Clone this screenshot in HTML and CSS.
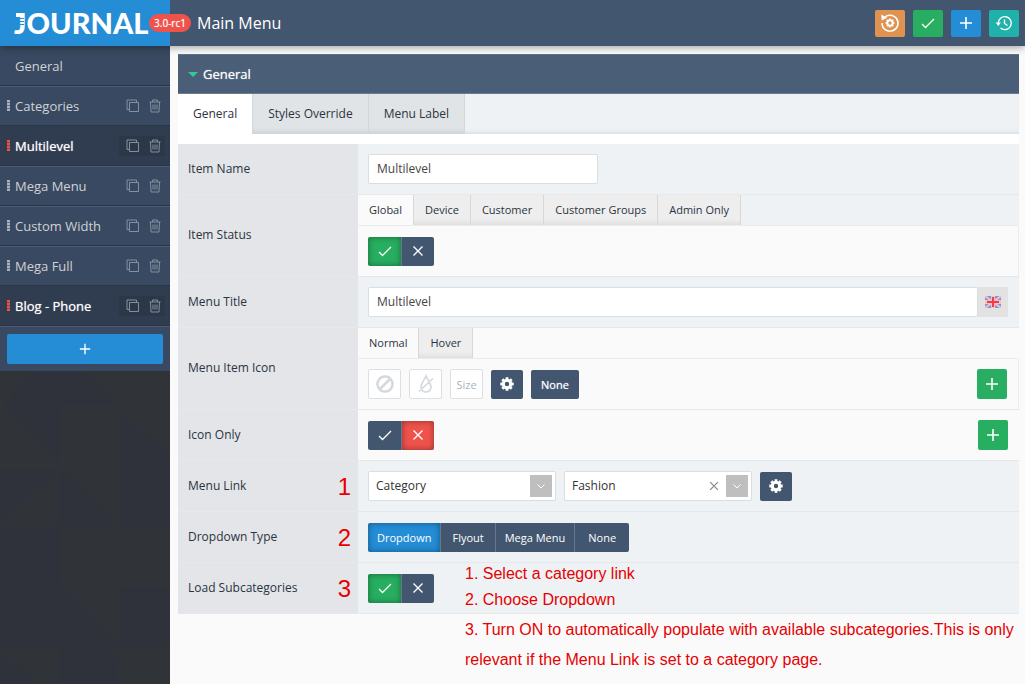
FILE: index.html
```html
<!DOCTYPE html>
<html lang="en">
<head>
    <meta charset="utf-8">
    <meta name="viewport" content="width=device-width, initial-scale=1.0">
    <title>Main Menu</title>
    <link rel="stylesheet" href="styles.css">
</head>
<body>
    <!-- icons -->
    <svg class="sprite" aria-hidden="true">
        <symbol id="copy" viewBox="0 0 14 14"><path d="M3.5 3.5h9v9h-9zM3.5 10.500h-2.500V1h9.500v2.500" fill="none" stroke="currentColor"/></symbol>
        <symbol id="trash" viewBox="0 0 12 14"><path d="M.5 3h11M3.500 3V1h5v2M1.500 3l.5 10h8l.5-10M4 5.500v5M6 5.500v5M8 5.500v5" fill="none" stroke="currentColor"/></symbol>
        <symbol id="plus" viewBox="0 0 14 14"><path d="M7 1v12M1 7h12" fill="none" stroke="currentColor" stroke-width="1.600"/></symbol>
        <symbol id="check" viewBox="0 0 14 14"><path d="M1 8l3.500 3.500L13 3" fill="none" stroke="currentColor" stroke-width="1.300"/></symbol>
        <symbol id="cross" viewBox="0 0 14 14"><path d="M2.500 2.500l9 9M11.500 2.500l-9 9" fill="none" stroke="currentColor" stroke-width="1.400"/></symbol>
        <symbol id="chevron" viewBox="0 0 14 14"><path d="M3.500 5.500L7 9l3.500-3.500" fill="none" stroke="currentColor"/></symbol>
        <symbol id="gear" viewBox="0 0 14 14"><circle cx="7" cy="7" r="3.700" fill="none" stroke="currentColor" stroke-width="3"/><path d="M7 .3v2.500M7 11.200v2.500M.3 7h2.500M11.200 7h2.500M2.300 2.300L4 4M10 10l1.700 1.700M11.700 2.300L10 4M2.300 11.700L4 10" fill="none" stroke="currentColor" stroke-width="2.800"/></symbol>
        <symbol id="reset" viewBox="0 0 20 20"><path d="M3.500 5.500A8 8 0 1 1 2 10" fill="none" stroke="currentColor" stroke-width="1.500"/><path d="M1.200 1.500l.6 6 5.400-2.700z" fill="currentColor"/><circle cx="10" cy="10" r="2.700" fill="none" stroke="currentColor" stroke-width="2"/><path d="M10 5.500v2M10 12.500v2M5.500 10h2M12.500 10h2M6.800 6.800l1.400 1.400M11.800 11.800l1.400 1.400M13.200 6.800l-1.400 1.400M6.800 13.200l1.400-1.400" stroke="currentColor" stroke-width="1.600"/></symbol>
        <symbol id="history" viewBox="0 0 18 18"><path d="M3.300 9.500A6.500 6.500 0 1 1 5.500 14M9.500 5.500V9.500l3 2" fill="none" stroke="currentColor" stroke-width="1.400"/><path d="M.7 8.500h5.200L3.300 12z" fill="currentColor"/></symbol>
        <symbol id="ban" viewBox="0 0 18 18"><path d="M9 1.500a7.500 7.500 0 1 0 .01 0zM4 14L14 4" fill="none" stroke="currentColor" stroke-width="2.500"/></symbol>
        <symbol id="drop" viewBox="0 0 18 20"><path d="M9 2C7.500 6 4 9 4 13a5 5 0 0 0 10 0c0-4-3.500-7-5-11zM2 17.500L16 4.500" fill="none" stroke="currentColor" stroke-width="1.700"/></symbol>
    </svg>

    <header class="topbar">
        <a class="brand" href="#"><span class="logo">JOURNAL</span><span class="version">3.0-rc1</span></a>
        <h1>Main Menu</h1>
        <div class="actions">
            <button class="action orange" aria-label="Reset"><svg width="20" height="20"><use href="#reset"/></svg></button>
            <button class="action green" aria-label="Save"><svg width="14" height="14"><use href="#check"/></svg></button>
            <button class="action blue" aria-label="Add"><svg width="14" height="14"><use href="#plus"/></svg></button>
            <button class="action teal" aria-label="History"><svg width="18" height="18"><use href="#history"/></svg></button>
        </div>
    </header>

    <div class="layout">
        <nav class="sidebar">
            <div class="item"><a href="#">General</a></div>
            <div class="item">
                <i class="grip"></i><a href="#">Categories</a>
                <span class="tools"><button aria-label="Copy"><svg width="14" height="14"><use href="#copy"/></svg></button><button aria-label="Delete"><svg width="12" height="14"><use href="#trash"/></svg></button></span>
            </div>
            <div class="item active">
                <i class="grip"></i><a href="#">Multilevel</a>
                <span class="tools"><button aria-label="Copy"><svg width="14" height="14"><use href="#copy"/></svg></button><button aria-label="Delete"><svg width="12" height="14"><use href="#trash"/></svg></button></span>
            </div>
            <div class="item">
                <i class="grip"></i><a href="#">Mega Menu</a>
                <span class="tools"><button aria-label="Copy"><svg width="14" height="14"><use href="#copy"/></svg></button><button aria-label="Delete"><svg width="12" height="14"><use href="#trash"/></svg></button></span>
            </div>
            <div class="item">
                <i class="grip"></i><a href="#">Custom Width</a>
                <span class="tools"><button aria-label="Copy"><svg width="14" height="14"><use href="#copy"/></svg></button><button aria-label="Delete"><svg width="12" height="14"><use href="#trash"/></svg></button></span>
            </div>
            <div class="item">
                <i class="grip"></i><a href="#">Mega Full</a>
                <span class="tools"><button aria-label="Copy"><svg width="14" height="14"><use href="#copy"/></svg></button><button aria-label="Delete"><svg width="12" height="14"><use href="#trash"/></svg></button></span>
            </div>
            <div class="item active">
                <i class="grip"></i><a href="#">Blog - Phone</a>
                <span class="tools"><button aria-label="Copy"><svg width="14" height="14"><use href="#copy"/></svg></button><button aria-label="Delete"><svg width="12" height="14"><use href="#trash"/></svg></button></span>
            </div>
            <div class="add"><button class="blue" aria-label="Add item"><svg width="12" height="12"><use href="#plus"/></svg></button></div>
            <div class="pattern">
                <svg viewBox="0 0 170 313" preserveAspectRatio="xMinYMin slice" aria-hidden="true">
                    <path fill="#2f323b" d="M34 0h52l34 34H60v60L3 35zM120 40l50 45v70h-50zM0 98h60L0 152zM60 98l58 57H60zM0 155h60v55l60 65-34 38H60v-37H0zM120 217h50v58h-50zM0 279l36 34H0zM118 283v30H88z"/>
                </svg>
            </div>
        </nav>

        <main class="content">
            <section class="panel">
                <h2 class="panel-title">General</h2>
                <div class="tabs">
                    <button class="selected">General</button><button>Styles Override</button><button>Menu Label</button>
                </div>

                <div class="row">
                    <div class="label"><label for="name">Item Name</label></div>
                    <div class="field"><input class="text short" id="name" type="text" value="Multilevel"></div>
                </div>
                <div class="row light">
                    <div class="label"><span>Item Status</span></div>
                    <div class="stack">
                        <div class="subtabs">
                            <button class="selected">Global</button><button>Device</button><button>Customer</button><button>Customer Groups</button><button>Admin Only</button>
                        </div>
                        <div class="field">
                            <div class="switch">
                                <button class="on green" aria-label="On"><svg width="14" height="14"><use href="#check"/></svg></button><button aria-label="Off"><svg width="14" height="14"><use href="#cross"/></svg></button>
                            </div>
                        </div>
                    </div>
                </div>
                <div class="row">
                    <div class="label"><label for="title">Menu Title</label></div>
                    <div class="field joined">
                        <input class="text" id="title" type="text" value="Multilevel">
                        <span class="flag">
                            <svg width="16" height="12" viewBox="0 0 16 12" aria-hidden="true">
                                <path fill="#8496cf" d="M0 0h16v12H0z"/>
                                <path stroke="#e9c3d0" stroke-width="2" d="M0 0l16 12M16 0L0 12"/>
                                <path stroke="#f7c0c8" stroke-width="4" d="M8 0v12M0 6h16"/>
                                <path stroke="#f03c44" stroke-width="2" d="M8 1v10M2 6h12"/>
                            </svg>
                        </span>
                    </div>
                </div>
                <div class="row light">
                    <div class="label"><span>Menu Item Icon</span></div>
                    <div class="stack">
                        <div class="subtabs plain">
                            <button class="selected">Normal</button><button>Hover</button>
                        </div>
                        <div class="field">
                            <button class="box" aria-label="No icon"><svg width="18" height="18"><use href="#ban"/></svg></button>
                            <button class="box" aria-label="No color"><svg width="18" height="20"><use href="#drop"/></svg></button>
                            <button class="box">Size</button>
                            <button class="dark gear" aria-label="Settings"><svg width="14" height="14"><use href="#gear"/></svg></button>
                            <button class="dark none">None</button>
                            <button class="plus green" aria-label="Add"><svg width="14" height="14"><use href="#plus"/></svg></button>
                        </div>
                    </div>
                </div>
                <div class="row light">
                    <div class="label"><span>Icon Only</span></div>
                    <div class="field">
                        <div class="switch">
                            <button aria-label="On"><svg width="14" height="14"><use href="#check"/></svg></button><button class="on red" aria-label="Off"><svg width="14" height="14"><use href="#cross"/></svg></button>
                        </div>
                        <button class="plus green" aria-label="Add"><svg width="14" height="14"><use href="#plus"/></svg></button>
                    </div>
                </div>
                <div class="row">
                    <div class="label"><label for="link">Menu Link</label><b class="step">1</b></div>
                    <div class="field">
                        <div class="select">
                            <select id="link"><option>Category</option></select>
                            <span class="arrow"><svg width="14" height="14"><use href="#chevron"/></svg></span>
                        </div>
                        <div class="select">
                            <select aria-label="Category"><option>Fashion</option></select>
                            <button class="clear" aria-label="Clear"><svg width="12" height="12"><use href="#cross"/></svg></button>
                            <span class="arrow"><svg width="14" height="14"><use href="#chevron"/></svg></span>
                        </div>
                        <button class="dark gear" aria-label="Settings"><svg width="14" height="14"><use href="#gear"/></svg></button>
                    </div>
                </div>
                <div class="row">
                    <div class="label"><span>Dropdown Type</span><b class="step">2</b></div>
                    <div class="field">
                        <div class="switch words">
                            <button class="on blue">Dropdown</button><button class="mid">Flyout</button><button>Mega Menu</button><button class="wide">None</button>
                        </div>
                    </div>
                </div>
                <div class="row">
                    <div class="label"><span>Load Subcategories</span><b class="step">3</b></div>
                    <div class="field">
                        <div class="switch">
                            <button class="on green" aria-label="On"><svg width="14" height="14"><use href="#check"/></svg></button><button aria-label="Off"><svg width="14" height="14"><use href="#cross"/></svg></button>
                        </div>
                    </div>
                </div>

                <!-- notes laid over the last row -->
                <div class="notes">
                    <p>1. Select a category link</p>
                    <p>2. Choose Dropdown</p>
                    <p class="long">3. Turn ON to automatically populate with available subcategories.This is only relevant if the Menu Link is set to a category page.</p>
                </div>
            </section>
        </main>
    </div>
</body>
</html>
```
FILE: styles.css
```css
* {
    box-sizing: border-box;
}

body {
    margin: 0;
    min-height: 100vh;
    display: flex;
    flex-direction: column;
    background: #fafafa;
    color: #2b3441;
    font-family: "Open Sans", "Noto Sans", sans-serif;
    font-size: 12px;
}

button {
    display: flex;
    align-items: center;
    justify-content: center;
    padding: 0;
    border: 0;
    background: none;
    color: inherit;
    font: inherit;
    cursor: pointer;
}

a {
    color: inherit;
    text-decoration: none;
}

.sprite {
    display: none;
}

.green { background: #27ae60; }
.blue { background: #248dd6; }
.orange { background: #e09351; }
.teal { background: #20b2aa; }
.red { background: #ef524b; }

/* top bar */
.topbar {
    position: relative;
    z-index: 2;
    display: flex;
    align-items: center;
    height: 46px;
    padding-right: 6px;
    background: #43566f;
    color: #fff;
    box-shadow: 0 1px 8px rgba(0, 0, 0, .4);
}

.brand {
    position: relative;
    width: 170px;
    height: 46px;
    padding-left: 14px;
    background: #248dd6;
}

.logo {
    font-family: "Lato", sans-serif;
    font-size: 29px;
    font-weight: 900;
    line-height: 46px;
}

/* top bar of the J */
.logo::before {
    content: "";
    position: absolute;
    left: 16px;
    top: 13px;
    width: 6px;
    height: 4px;
    background: #fff;
}

/* stripes cut into the J */
.logo::after {
    content: "";
    position: absolute;
    left: 20px;
    top: 18px;
    width: 4px;
    height: 8px;
    background: repeating-linear-gradient(#248dd6 0 1px, transparent 1px 3px);
}

.version {
    position: absolute;
    left: 149px;
    top: 14px;
    width: 42px;
    border-radius: 9px;
    background: #ef524b;
    font-size: 10px;
    font-weight: 500;
    line-height: 18px;
    text-align: center;
}

.topbar h1 {
    margin: 0 0 0 27px;
    font-size: 16px;
    font-weight: 400;
}

.actions {
    display: flex;
    gap: 8px;
    margin-left: auto;
}

.action {
    width: 30px;
    height: 27px;
    border-radius: 2px;
}

/* sidebar */
.layout {
    display: flex;
    flex: 1;
}

.sidebar {
    display: flex;
    flex-direction: column;
    width: 170px;
    background: #394961;
}

.item {
    display: flex;
    align-items: center;
    height: 40px;
    padding: 0 5px 0 7px;
    border-bottom: 1px solid #2a3647;
    box-shadow: 0 1px #4a5c74;
    color: #d0d2d4;
    font-size: 13px;
}

.item:first-child {
    padding-left: 15px;
}

.item.active {
    background: #303c4f;
    color: #fff;
    font-weight: 500;
}

.version,
.item.active a,
.panel-title,
.words,
.none {
    text-shadow: 0 0 1px rgba(255, 255, 255, .7);
}

.grip {
    width: 3px;
    height: 11px;
    margin-right: 5px;
    background: repeating-linear-gradient(#aab2bd 0 2px, #68758a 2px 3px);
}

.active .grip {
    background: repeating-linear-gradient(#ef524b 0 2px, #8b464d 2px 3px);
}

.tools {
    display: flex;
    gap: 9px;
    margin-left: auto;
    padding: 3px 4px 3px 7px;
    color: #8390a0;
}

.active .tools {
    background: #2c3848;
}

.add {
    padding: 8px 7px 7px;
}

.add button {
    width: 100%;
    height: 30px;
    border-radius: 2px;
    color: #fff;
}

.pattern {
    position: relative;
    flex: 1;
    background: #303338;
    overflow: hidden;
}

.pattern svg {
    position: absolute;
    width: 100%;
    height: 100%;
}

/* panel */
.content {
    flex: 1;
    min-width: 0;
    padding: 8px 6px 0 8px;
}

.panel {
    position: relative;
    background: #fff;
}

.panel-title {
    display: flex;
    align-items: center;
    gap: 5px;
    height: 40px;
    margin: 0;
    padding-left: 10px;
    border-top: 1px solid #5f738a;
    border-bottom: 1px solid #6b7d92;
    background: #4a5f77;
    color: #fff;
    font-size: 13px;
    font-weight: 500;
}

.panel-title::before {
    content: "";
    border: 5px solid transparent;
    border-top-color: #2ecc8f;
    border-bottom: 0;
}

.tabs,
.subtabs {
    display: flex;
    background: #eef2f5;
}

.tabs {
    height: 40px;
    margin-bottom: 10px;
    box-shadow: inset 0 -4px 4px -3px #d5d8db;
}

.tabs button {
    padding: 0 15px 2px;
    border-right: 1px solid #d4d7da;
    background: linear-gradient(#e1e4e7 34px, #d0d3d6);
}

.tabs .selected {
    background: #fff;
}

.subtabs {
    height: 30px;
}

.subtabs.plain {
    background: #fafafa;
}

.subtabs button {
    padding: 0 11px 2px;
    border-right: 1px solid #d8d8d8;
    background: linear-gradient(#eee 24px, #e0e0e0);
    font-size: 11px;
}

.subtabs .selected {
    background: #fafafa;
}

.row {
    display: flex;
    border-bottom: 1px solid #e6e9ec;
    background: #eef2f5;
}

.row.light {
    background: #fafafa;
}

.label {
    display: flex;
    align-items: center;
    justify-content: space-between;
    width: 180px;
    padding: 0 7px 0 10px;
    background: #e3e5e9;
}

.label > :first-child {
    padding-bottom: 2px;
}

.step {
    padding-top: 2px;
    color: #e60000;
    font-family: "Liberation Sans", Arial, sans-serif;
    font-size: 24px;
    font-weight: 400;
    line-height: 24px;
}

.stack {
    flex: 1;
}

.field {
    display: flex;
    flex: 1;
    align-items: center;
    gap: 8px;
    height: 50px;
    padding: 0 11px 0 10px;
}

.stack .field {
    height: 51px;
    border-top: 1px solid #ececec;
    border-right: 1px solid #ececec;
}

.text {
    flex: 1;
    height: 30px;
    padding: 0 8px 2px;
    border: 1px solid #d9dee3;
    border-radius: 2px;
    background: #fff;
    color: #444;
    font: inherit;
}

.short {
    flex: 0 0 230px;
}

.joined {
    gap: 0;
}

.flag {
    display: flex;
    align-items: center;
    justify-content: center;
    width: 30px;
    height: 30px;
    background: #e2e2e2;
}

.switch {
    display: flex;
    height: 29px;
    border-radius: 2px;
    overflow: hidden;
    color: #fff;
}

.switch button {
    width: 33px;
    background: #43566f;
}

.switch button + button {
    border-left: 1px solid #66778c;
}

.switch .on {
    box-shadow: inset 0 0 6px rgba(0, 0, 0, .4);
}

.switch .green { background: #27ae60; }
.switch .red { background: #ef524b; }
.switch .blue { background: #248dd6; }

.words button {
    width: auto;
    padding: 0 9px;
    font-size: 11px;
    font-weight: 500;
}

.words .mid {
    padding: 0 11px;
}

.words .wide {
    padding: 0 13px;
}

.box {
    width: 33px;
    height: 30px;
    border: 1px solid #dcdfe3;
    border-radius: 2px;
    background: #fff;
    color: #d5d8dc;
}

.box:nth-child(3) {
    color: #aab2bd;
    font-size: 11px;
}

.dark {
    height: 29px;
    border-radius: 2px;
    background: #43566f;
    color: #fff;
    font-size: 11px;
    font-weight: 500;
}

.gear {
    width: 32px;
}

.none {
    width: 48px;
}

.plus {
    width: 30px;
    height: 30px;
    margin-left: auto;
    border-radius: 2px;
    color: #fff;
}

.select {
    position: relative;
    width: 188px;
}

.select select {
    display: block;
    width: 100%;
    height: 30px;
    padding: 0 7px 2px;
    appearance: none;
    border: 1px solid #d9dee3;
    border-radius: 2px;
    background: #fff;
    color: #333;
    font: inherit;
}

.arrow {
    position: absolute;
    top: 4px;
    right: 4px;
    display: flex;
    align-items: center;
    justify-content: center;
    width: 22px;
    height: 22px;
    background: #bfbfbf;
    color: #fff;
    pointer-events: none;
}

.clear {
    position: absolute;
    top: 9px;
    right: 32px;
    color: #888;
}

/* red notes */
.notes {
    position: absolute;
    left: 287px;
    right: 0;
    bottom: -61px;
    color: #e60000;
    font-family: "Liberation Sans", Arial, sans-serif;
    font-size: 16px;
    line-height: 26px;
}

.notes p {
    margin: 0;
}

.notes .long {
    margin-top: 2px;
    line-height: 30px;
}
```
